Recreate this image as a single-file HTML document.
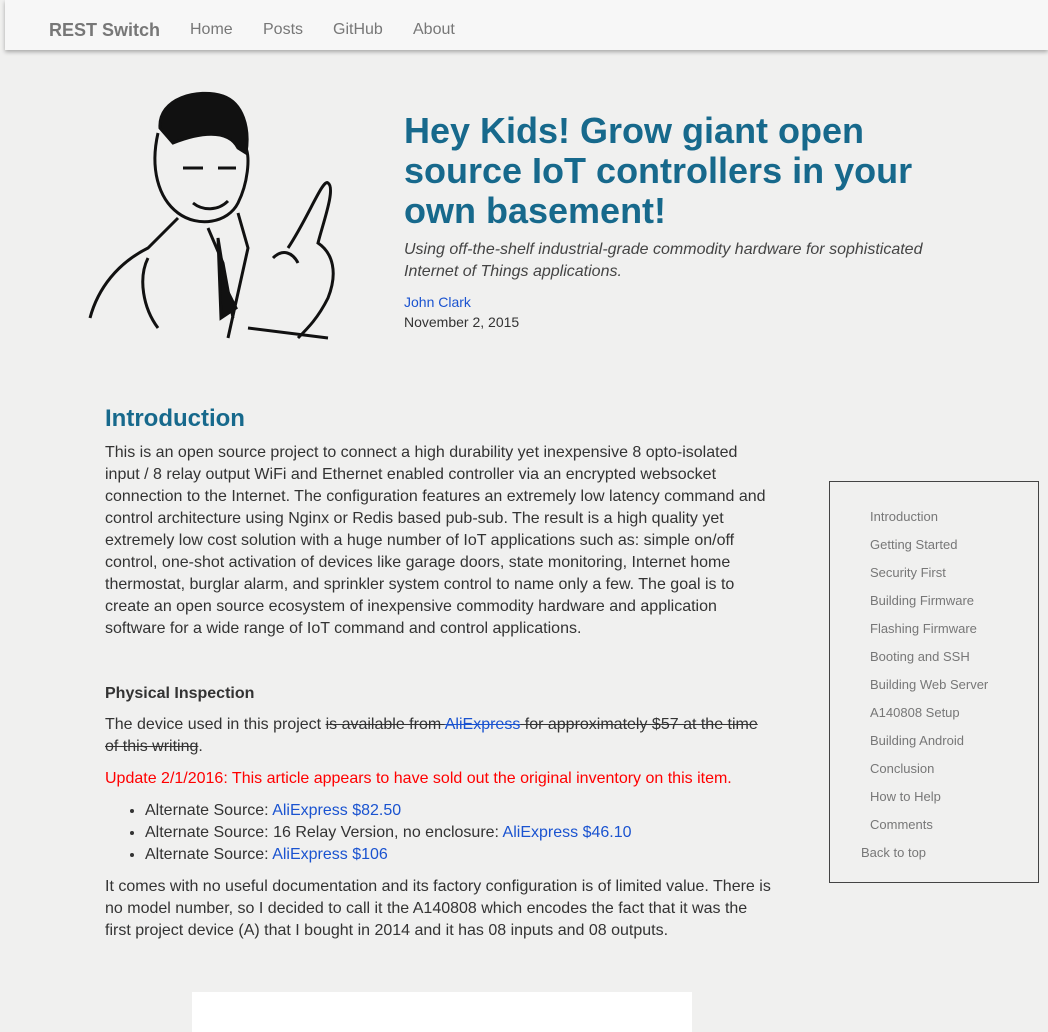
<!DOCTYPE html>
<html><head><meta charset="utf-8"><style>
body{margin:0;background:#f0f0ef;font-family:"Liberation Sans",sans-serif;color:#333;width:1048px;height:1024px;overflow:hidden;position:relative}
.nav{position:absolute;left:5px;top:0;width:1043px;height:50px;background:#f7f7f7;box-shadow:0 2px 4px rgba(0,0,0,.3)}
.nav span{position:absolute;top:21px;font-size:16px;color:#777}
.nav .brand{font-size:18px;font-weight:bold;left:44px;top:20px}
h1{position:absolute;left:404px;top:111px;margin:0;width:560px;font-size:36px;line-height:40px;color:#17698c;font-weight:bold}
.sub{position:absolute;left:404px;top:239px;width:560px;font-size:16px;line-height:22px;font-style:italic;color:#444}
.auth{position:absolute;left:404px;top:292px;font-size:14px;line-height:20px}
a,.a{color:#1a53d0;text-decoration:none}
.t{position:absolute;left:105px;width:700px;font-size:16px;line-height:22px;white-space:nowrap}
h2{position:absolute;left:105px;top:405px;margin:0;font-size:24px;color:#17698c}
.toc{position:absolute;left:829px;top:481px;width:208px;height:400px;border:1px solid #444}
.toc div{position:absolute;left:40px;font-size:13px;color:#777}
s{text-decoration:line-through}
ul{margin:0;padding-left:40px}
</style></head><body>
<div class="nav"><span class="brand">REST Switch</span><span style="left:185px">Home</span><span style="left:258px">Posts</span><span style="left:328px">GitHub</span><span style="left:408px">About</span></div>
<svg style="position:absolute;left:88px;top:88px" width="256" height="254" viewBox="0 0 256 254" fill="none" stroke="#111" stroke-width="3">
<path d="M72 40 C70 10 110 0 135 8 C155 15 162 40 158 65 L150 60 C140 40 110 45 85 55 Z" fill="#111"/>
<path d="M70 45 C62 80 70 110 90 125 C110 140 140 135 150 115 C160 95 162 70 158 60"/>
<path d="M95 80 h20 M130 80 h18 M105 115 c10 8 25 8 35 -2"/>
<path d="M90 130 L60 160 C30 175 10 200 2 230 M150 125 L160 160 L140 250 M120 140 L135 175 L145 230" />
<path d="M130 150 l8 50 l10 20 l-15 10z" fill="#111"/>
<path d="M200 160 c20 -30 35 -70 40 -65 c8 5 -5 40 -10 60 c15 10 20 30 10 55 c-10 20 -20 30 -30 40 M185 170 c10 -10 20 -5 25 5 M60 170 c-10 20 -5 50 10 70 M240 250 l-80 -10"/>
</svg>
<h1>Hey Kids! Grow giant open source IoT controllers in your own basement!</h1>
<div class="sub">Using off-the-shelf industrial-grade commodity hardware for sophisticated Internet of Things applications.</div>
<div class="auth"><a>John Clark</a><br>November 2, 2015</div>
<h2>Introduction</h2>
<div class="t" style="top:442px">This is an open source project to connect a high durability yet inexpensive 8 opto-isolated<br>input / 8 relay output WiFi and Ethernet enabled controller via an encrypted websocket<br>connection to the Internet. The configuration features an extremely low latency command and<br>control architecture using Nginx or Redis based pub-sub. The result is a high quality yet<br>extremely low cost solution with a huge number of IoT applications such as: simple on/off<br>control, one-shot activation of devices like garage doors, state monitoring, Internet home<br>thermostat, burglar alarm, and sprinkler system control to name only a few. The goal is to<br>create an open source ecosystem of inexpensive commodity hardware and application<br>software for a wide range of IoT command and control applications.</div>
<div class="t" style="top:683px;font-weight:bold">Physical Inspection</div>
<div class="t" style="top:714px">The device used in this project <s>is available from <a style="text-decoration:line-through">AliExpress</a> for approximately $57 at the time<br>of this writing</s>.</div>
<div class="t" style="top:768px;color:#f00">Update 2/1/2016: This article appears to have sold out the original inventory on this item.</div>
<div class="t" style="top:800px"><ul><li>Alternate Source: <a>AliExpress $82.50</a></li><li>Alternate Source: 16 Relay Version, no enclosure: <a>AliExpress $46.10</a></li><li>Alternate Source: <a>AliExpress $106</a></li></ul></div>
<div class="t" style="top:876px">It comes with no useful documentation and its factory configuration is of limited value. There is<br>no model number, so I decided to call it the A140808 which encodes the fact that it was the<br>first project device (A) that I bought in 2014 and it has 08 inputs and 08 outputs.</div>
<div style="position:absolute;left:192px;top:992px;width:500px;height:40px;background:#fff"></div>
<div class="toc">
<div style="top:27px">Introduction</div><div style="top:55px">Getting Started</div><div style="top:83px">Security First</div><div style="top:111px">Building Firmware</div><div style="top:139px">Flashing Firmware</div><div style="top:167px">Booting and SSH</div><div style="top:195px">Building Web Server</div><div style="top:223px">A140808 Setup</div><div style="top:251px">Building Android</div><div style="top:279px">Conclusion</div><div style="top:307px">How to Help</div><div style="top:335px">Comments</div><div style="top:363px;left:31px">Back to top</div>
</div>
</body></html>
